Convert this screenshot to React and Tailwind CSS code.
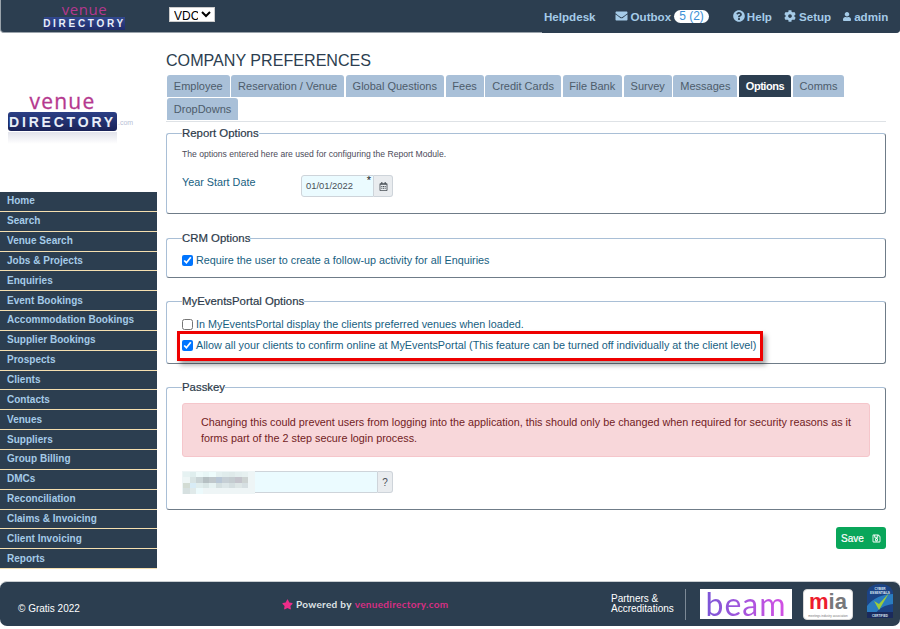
import React from "react";
import { FaEnvelope, FaQuestionCircle, FaCog, FaUser, FaRegCalendarAlt, FaRegSave, FaStar } from "react-icons/fa";

const NAV = ["Home","Search","Venue Search","Jobs & Projects","Enquiries","Event Bookings","Accommodation Bookings","Supplier Bookings","Prospects","Clients","Contacts","Venues","Suppliers","Group Billing","DMCs","Reconciliation","Claims & Invoicing","Client Invoicing","Reports"];
const TABS = ["Employee","Reservation / Venue","Global Questions","Fees","Credit Cards","File Bank","Survey","Messages","Options","Comms","DropDowns"];

function Logo({ big }) {
  return (
    <div className="flex flex-col items-center font-['Open_Sans',sans-serif]">
      <div className={big ? "mb-[1px] text-[21px] h-[19px] leading-[19px] tracking-[1.2px] text-[#b5388f] [-webkit-text-stroke:0.3px_#b5388f]" : "mb-[1px] text-[15px] h-[14px] leading-[14px] tracking-[0.6px] text-[#b5388f]"}>venue</div>
      <div className={big ? "flex h-[19px] w-[109px] items-center justify-center rounded-[3px] bg-gradient-to-b from-[#2b3f86] to-[#1a2358] text-[14px] leading-[14px] font-bold tracking-[2.8px] text-[#e8eef8] font-['Liberation_Sans',sans-serif]" : "flex h-[13px] w-[81px] items-center justify-center bg-gradient-to-b from-[#33498f] to-[#1f2c6b] text-[10px] leading-[10px] font-bold tracking-[2.7px] text-[#e8eef8] font-['Liberation_Sans',sans-serif]"}>DIRECTORY</div>
    </div>
  );
}

function Group({ title, className, children }) {
  return (
    <fieldset className={"rounded-[3px] border border-t-[#a9bfd6] border-l-[#a9bfd6] border-r-[#6f7c88] border-b-[#6f7c88] px-[15px] " + className}>
      <legend className="text-[11.4px] leading-[14px] text-[#2c3a4a] [-webkit-text-stroke:0.2px_#2c3a4a]">{title}</legend>
      {children}
    </fieldset>
  );
}

const BLUR = [
  "#e6f2f2","#dfeeee","#eefafa","#e8f6f6","#eefcfc","#e4f0f0","#e0ecec","#dfeaea","#e3eeee","#e6f0f0","#eef6f6",
  "#d8e4e4","#c9d4d6","#b6c0c3","#c0c8cc","#b9c7d6","#c6cfd5","#c4ccd0","#c4c4cc","#cdd3d2","#d3dcd4","#d8ecf6",
  "#e0eded","#d9e6e6","#e6f2f2","#d4dfe0","#dce6e8","#d4dee0","#dde6e6","#d6dfe2","#d6e0e0","#e0eaea","#ecfafc",
];

export default function App() {
  return (
    <div className="flex h-[629px] w-[900px] flex-col overflow-hidden bg-white font-['Liberation_Sans',sans-serif] text-[#17607f]">
      <header className="flex h-[33px] shrink-0 items-start rounded-b-[4px] border-b border-l border-[#9aa3ab] bg-[#2c3e50]">
        <div className="ml-[42px] mt-[2px] w-[83px]"><Logo /></div>
        <select className="ml-[43px] mt-[7px] h-[15px] w-[46px] border border-[#ccc] bg-white text-[12px] leading-[13px] text-black" defaultValue="VDC">
          <option>VDC</option>
        </select>
        <nav className="ml-auto flex h-[33px] w-[358px] items-center rounded-br-[4px] bg-[#2c3e50] pl-[2px] text-[11.6px] font-bold text-[#a5cbe8]">
          <span>Helpdesk</span>
          <span className="ml-[19px] flex items-center gap-[3px]"><FaEnvelope className="h-[12px] w-[13px]" />Outbox<span className="whitespace-nowrap rounded-full bg-white px-[5px] text-[12px] leading-[13px] font-normal text-[#3a8fd6]">5 (2)</span></span>
          <span className="ml-[24px] flex items-center gap-[2px]"><FaQuestionCircle className="h-[12px] w-[12px]" />Help</span>
          <span className="ml-[12px] flex items-center gap-[3px]"><FaCog className="h-[12px] w-[12px]" />Setup</span>
          <span className="ml-[12px] flex items-center gap-[3px]"><FaUser className="h-[11px] w-[8px]" />admin</span>
        </nav>
      </header>

      <div className="flex min-h-0 flex-1">
        <aside className="w-[157px] shrink-0">
          <div className="flex h-[159px] flex-col items-start pl-[8px] pt-[59px]">
            <div className="relative">
              <Logo big />
              <span className="absolute left-[110px] top-[27px] text-[7px] leading-none text-[#b9bfd6]">.com</span>
              <div className="mx-auto mt-[1px] h-[12px] w-[109px] bg-gradient-to-b from-[#d5d7e2] to-white opacity-70" />
            </div>
          </div>
          <ul className="flex h-[377px] flex-col">
            {NAV.map((n) => (
              <li key={n} className="flex flex-1 items-center border-b border-[#f5dfb0] bg-[#2c3e50] pb-[1px] pl-[7px] text-[10px] font-bold tracking-[0.02px] text-[#a5cbe8]">{n}</li>
            ))}
          </ul>
        </aside>

        <main className="w-[729px] pl-[9px]">
          <h1 className="mt-[17px] text-[16.1px] leading-[21px] font-normal text-[#2c3e50]">COMPANY PREFERENCES</h1>
          <div className="mt-[4px] flex flex-wrap gap-x-[1.8px] gap-y-[1px] border-b border-[#dee2e6] pl-[1px] pb-[1px]">
            {TABS.map((t) => (
              <div key={t} className={"flex h-[22px] items-center rounded-t-[3px] px-[6.8px] text-[11px] " + (t === "Options" ? "bg-[#2c3e50] font-bold tracking-[-0.45px] text-white" : "bg-[#a9c0d8] text-[#4d5c6b]")}>{t}</div>
            ))}
          </div>

          <Group title="Report Options" className="mt-[4px] h-[88px]">
            <p className="mt-[8px] text-[8.6px] leading-[12px] text-[#4b4b5a]">The options entered here are used for configuring the Report Module.</p>
            <div className="mt-[15px] flex items-start">
              <label className="w-[119px] text-[10.8px] leading-[14px]">Year Start Date</label>
              <div className="flex h-[22px]">
                <div className="relative flex w-[73px] items-center rounded-l-[3px] border border-[#ced4da] bg-[#ebfbff] pl-[4px] text-[9.4px] text-[#495057]">01/01/2022<span className="absolute right-[2px] -top-[1px] text-[11px] leading-[11px] text-[#222]">*</span></div>
                <div className="flex w-[19px] items-center justify-center rounded-r-[3px] border border-l-0 border-[#ced4da] bg-[#e9ecef] text-[#495057]"><FaRegCalendarAlt className="h-[9px] w-[9px]" /></div>
              </div>
            </div>
          </Group>

          <Group title="CRM Options" className="mt-[17px] h-[47px]">
            <label className="mt-[8px] flex items-center gap-[3px] text-[10.8px] leading-[14px]"><input type="checkbox" defaultChecked className="m-0 h-[11px] w-[11px]" />Require the user to create a follow-up activity for all Enquiries</label>
          </Group>

          <Group title="MyEventsPortal Options" className="mt-[16px] h-[70px]">
            <label className="mt-[9px] flex items-center gap-[3px] text-[10.8px] leading-[14px]"><input type="checkbox" className="m-0 h-[11px] w-[11px]" />In MyEventsPortal display the clients preferred venues when loaded.</label>
            <div className="relative mt-[7px]">
              <label className="flex items-center gap-[3px] text-[10.8px] leading-[14px]"><input type="checkbox" defaultChecked className="m-0 h-[11px] w-[11px]" />Allow all your clients to confirm online at MyEventsPortal (This feature can be turned off individually at the client level)</label>
              <div className="pointer-events-none absolute -left-[5px] -top-[7px] h-[30px] w-[586px] border-[3px] border-[#ee0000] shadow-[3px_4px_5px_rgba(0,0,0,0.35)]" />
            </div>
          </Group>

          <Group title="Passkey" className="mt-[16px] h-[130px]">
            <div className="mt-[9px] flex h-[54px] items-center rounded-[3px] border border-[#f5c6cb] bg-[#f8d7da] px-[18px] text-[10.8px] leading-[16px] text-[#721c24]">
              Changing this could prevent users from logging into the application, this should only be changed when required for security reasons as it forms part of the 2 step secure login process.
            </div>
            <div className="relative mt-[14px] flex h-[22px]">
              <div className="w-[196px] rounded-l-[3px] border border-[#ced4da] bg-[#ebfbff]" />
              <div className="flex w-[15px] items-center justify-center rounded-r-[3px] border border-l-0 border-[#ced4da] bg-[#e9ecef] text-[10px] text-[#495057]">?</div>
              <div className="absolute left-0 top-0 flex h-[23px] w-[73px] flex-wrap content-center bg-[#eef5f6] px-[1px] blur-[0.4px]">
                {BLUR.map((c, i) => (<span key={i} className="h-[5.5px] w-[6.5px]" style={{ backgroundColor: c }} />))}
              </div>
            </div>
          </Group>

          <div className="mt-[17px] flex justify-end">
            <button className="flex h-[22px] w-[50px] items-center justify-center gap-[8px] rounded-[3px] bg-[#09a65a] text-[10px] text-white [-webkit-text-stroke:0.2px_#fff]">Save<FaRegSave className="h-[9px] w-[9px]" /></button>
          </div>
        </main>
      </div>

      <footer className="mb-[3px] flex h-[45px] shrink-0 items-center rounded-[7px] border-t border-[#c9ced2] bg-[#2c3e50] text-white">
        <span className="ml-[18px] mt-[8px] w-[264px] text-[10px]">© Gratis 2022</span>
        <span className="flex w-[329px] items-center gap-[3px] text-[10px] font-bold tracking-[0.3px] font-['Lato',sans-serif]">
          <FaStar className="h-[11px] w-[11px] text-[#ee2d8a]" />
          <span className="text-[#dfe3e6]">Powered by</span>
          <span className="text-[#d62f84]">venuedirectory.com</span>
        </span>
        <span className="w-[74px] text-[10px] leading-[10px]">Partners &amp;<br />Accreditations</span>
        <span className="h-[31px] w-px bg-[#7c8996]" />
        <span className="ml-[14px] flex h-[30px] w-[92px] items-center justify-center bg-white font-['Lato',sans-serif] text-[32px] leading-[30px] font-normal tracking-[1px]">
          <span className="bg-gradient-to-r from-[#7a55d6] to-[#d44fe4] bg-clip-text text-transparent">beam</span>
        </span>
        <span className="ml-[11px] flex h-[31px] w-[50px] flex-col items-center justify-center rounded-[4px] border border-[#d8d8d8] bg-white">
          <span className="text-[22px] leading-[24px] font-bold text-[#ed1c2e]">m<span className="text-[#77787b]">ia</span></span>
          <span className="whitespace-nowrap text-[3px] leading-[4px] text-[#777]">meetings industry association</span>
        </span>
        <svg className="ml-[14px] -mt-[6px]" width="26" height="34" viewBox="0 0 26 34">
          <path d="M13 0C6 0 1 3 0 8v26h26V8C25 3 20 0 13 0z" fill="#1c4384" />
          <path d="M0 22C6 14 16 10 26 10v10c-8 1-14 4-18 10H0z" fill="#2a7cc0" />
          <path d="M7 17l5 9L22 9 12 20z" fill="#9ccb3b" />
          <rect x="0" y="28" width="26" height="6" fill="#1a2a5c" />
          <text x="13" y="6" textAnchor="middle" fontSize="3.2" fontWeight="700" fill="#dfe9f5">CYBER</text>
          <text x="13" y="10" textAnchor="middle" fontSize="3.2" fontWeight="700" fill="#dfe9f5">ESSENTIALS</text>
          <text x="13" y="32.5" textAnchor="middle" fontSize="3" fontWeight="700" fill="#dfe9f5">CERTIFIED</text>
        </svg>
      </footer>
    </div>
  );
}
